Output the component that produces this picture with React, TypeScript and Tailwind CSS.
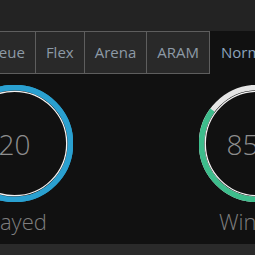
const tabs = ['Solo Queue', 'Flex', 'Arena', 'ARAM', 'Normal']

function Gauge({ value, percent, color, track }: { value: string; percent: number; color: string; track: string }) {
  const r = 56
  const c = 2 * Math.PI * r
  return (
    <div className="relative w-[117px] h-[117px] shrink-0">
      <svg width="117" height="117" viewBox="0 0 117 117" className="block -rotate-90">
        <circle cx="58.5" cy="58.5" r={r} fill="none" stroke={track} strokeWidth="5.5" />
        <circle
          cx="58.5"
          cy="58.5"
          r={r}
          fill="none"
          stroke={color}
          strokeWidth="5.5"
          strokeDasharray={`${(c * percent) / 100} ${c}`}
        />
        <circle cx="58.5" cy="58.5" r="52.2" fill="none" stroke="#f2f2f2" strokeWidth="1.3" />
      </svg>
      <div className="absolute inset-0 flex items-center justify-center text-[28px] font-light text-[#8e8e8e] whitespace-nowrap">
        {value}
      </div>
    </div>
  )
}

export default function App() {
  return (
    <div className="w-[255px] h-[255px] overflow-hidden bg-[#232323] font-['Open_Sans',sans-serif]">
      <div className="h-[31px]" />

      {/* Tabs */}
      <div className="flex h-[43px] ml-[-66px]">
        {tabs.map((t) => {
          const active = t === 'Normal'
          return (
            <div
              key={t}
              className={
                active
                  ? 'flex items-center px-[11px] bg-[#111111] text-[15px] text-[#8ba3bb] whitespace-nowrap'
                  : 'flex items-center px-[10px] bg-[#292929] border-y border-r border-[#5e5e5e] text-[15px] text-[#8d9aa6] whitespace-nowrap'
              }
            >
              {t}
            </div>
          )
        })}
      </div>

      {/* Stats */}
      <div className="bg-[#111111] h-[170px] pt-[11px]">
        <div className="flex gap-[126px] ml-[-44px]">
          <div className="flex flex-col items-center w-[117px]">
            <Gauge value="20" percent={100} color="#2aa0d0" track="#2aa0d0" />
            <div className="mt-[4px] text-[22px] leading-[30px] font-light text-[#7f7f7f] whitespace-nowrap">Played</div>
          </div>
          <div className="flex flex-col items-center w-[117px]">
            <Gauge value="85 %" percent={85} color="#3dbd8c" track="#e6e6e6" />
            <div className="mt-[4px] text-[22px] leading-[30px] font-light text-[#7f7f7f] whitespace-nowrap">Winrate</div>
          </div>
        </div>
      </div>

      <div className="h-[11px] bg-[#2a2a2a]" />
    </div>
  )
}
